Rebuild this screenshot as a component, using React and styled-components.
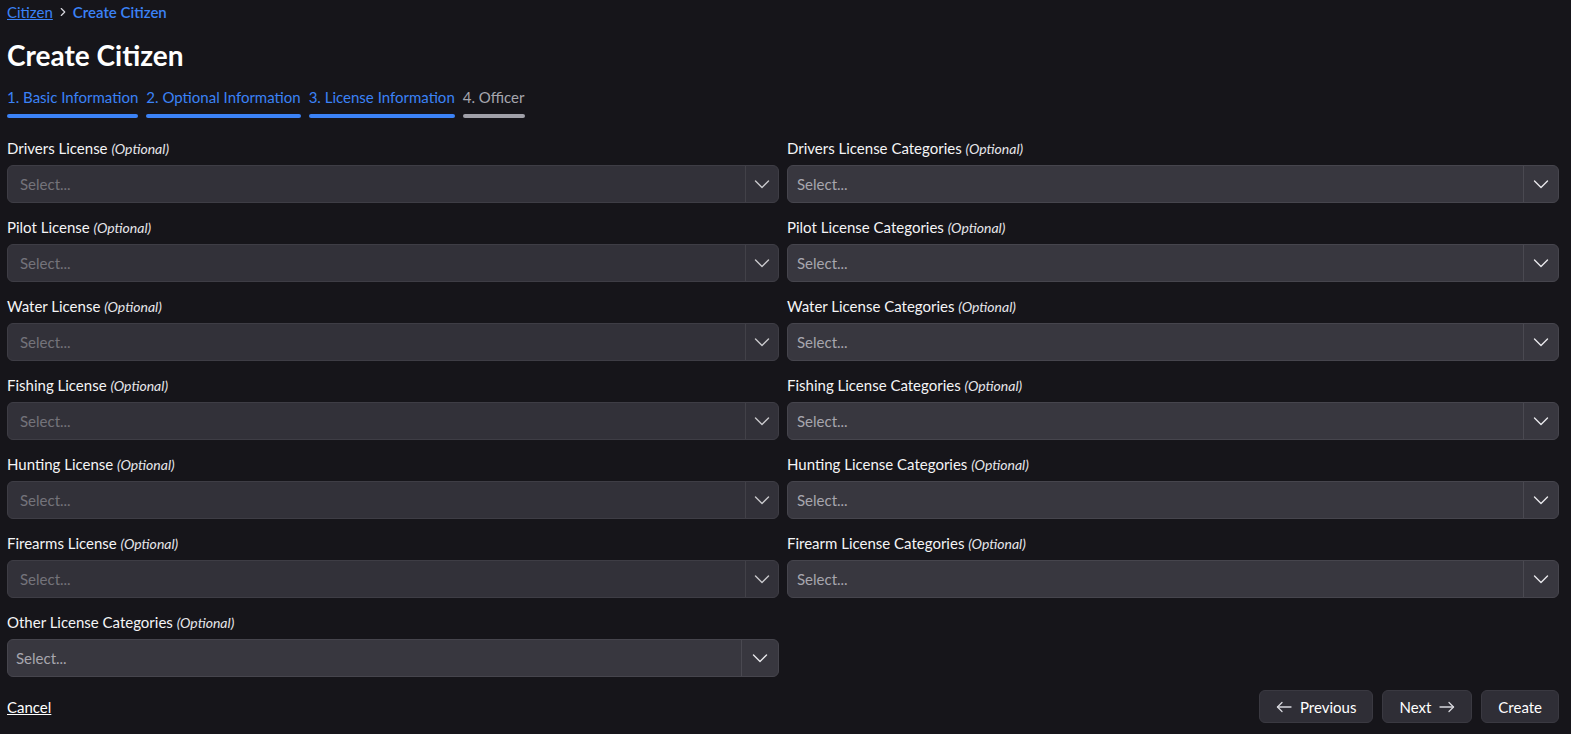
import React from "react";
import styled, { createGlobalStyle } from "styled-components";

const GlobalStyle = createGlobalStyle`
  html, body {
    margin: 0;
    padding: 0;
    background: #16151a;
  }
  body {
    font-family: "Lato", "Noto Sans", sans-serif;
    color: #ffffff;
  }
  * {
    box-sizing: border-box;
  }
`;

const Page = styled.main`
  height: 734px;
  overflow: hidden;
  padding: 1px 12px 0 7px;
  background: #16151a;
`;

const Breadcrumbs = styled.nav`
  display: flex;
  align-items: center;
  gap: 3px;
  height: 22px;
  font-size: 15px;
  color: #3b82f6;
  a {
    color: #3b82f6;
    text-decoration: underline;
  }
  span {
    font-weight: 600;
  }
  svg {
    color: #d6d6dc;
  }
`;

const Title = styled.h1`
  margin: 12px 0 0 0;
  font-size: 28px;
  line-height: 40px;
  font-weight: 700;
`;

const Steps = styled.ol`
  display: flex;
  gap: 8px;
  margin: 12px 0 0 0;
  padding: 0;
  list-style: none;
`;

const Step = styled.li`
  display: flex;
  flex-direction: column;
  gap: 7px;
  font-size: 15px;
  line-height: 20px;
  color: ${(p) => (p.$active ? "#3b82f6" : "#a6a6ae")};
  &::after {
    content: "";
    height: 4px;
    border-radius: 4px;
    background: ${(p) => (p.$active ? "#3b82f6" : "#a0a0a8")};
  }
`;

const Form = styled.form`
  margin-top: 20px;
`;

const Grid = styled.div`
  display: grid;
  grid-template-columns: 1fr 1fr;
  column-gap: 8px;
`;

const Field = styled.div`
  display: flex;
  flex-direction: column;
  margin-bottom: 14px;
`;

const Label = styled.label`
  display: block;
  height: 20px;
  font-size: 15px;
  line-height: 20px;
  margin-bottom: 7px;
  color: #f4f4f6;
  i {
    font-size: 14px;
    line-height: 20px;
    color: #e6e6ea;
  }
`;

const SelectBox = styled.div`
  display: flex;
  align-items: stretch;
  height: 38px;
  border: 1px solid #46454d;
  border-radius: 6px;
  background: #38373f;
  opacity: ${(p) => (p.$multi ? 1 : 0.85)};
`;

const Placeholder = styled.div`
  flex: 1;
  display: flex;
  align-items: center;
  padding-left: ${(p) => p.$inset}px;
  font-size: 15px;
  color: ${(p) => (p.$multi ? "#a7a6ae" : "#85848c")};
`;

const Indicator = styled.div`
  display: flex;
  align-items: center;
  justify-content: center;
  width: ${(p) => p.$width}px;
  border-left: 1px solid #4a4951;
  color: #e8e8ec;
`;

const Footer = styled.div`
  display: flex;
  align-items: center;
  justify-content: space-between;
  margin-top: -1px;
`;

const CancelLink = styled.a`
  font-size: 15px;
  color: #ffffff;
  text-decoration: underline;
`;

const Buttons = styled.div`
  display: flex;
  gap: 9px;
`;

const Button = styled.button`
  display: flex;
  align-items: center;
  gap: 8px;
  height: 33px;
  padding: 0 16px;
  border: 1px solid #3a3941;
  border-radius: 6px;
  background: #2f2e36;
  color: #ffffff;
  font-family: inherit;
  font-size: 15px;
  svg {
    color: #d8d8de;
  }
`;

const ChevronRight = () => (
  <svg width="14" height="14" viewBox="0 0 24 24" fill="none" stroke="currentColor" strokeWidth="2" strokeLinecap="round" strokeLinejoin="round">
    <polyline points="9 6 15 12 9 18" />
  </svg>
);

const ChevronDown = () => (
  <svg width="16" height="10" viewBox="0 0 16 10" fill="none" stroke="currentColor" strokeWidth="1.4" strokeLinecap="round" strokeLinejoin="round">
    <polyline points="1.5 2 8 8.5 14.5 2" />
  </svg>
);

const Arrow = ({ dir }) => (
  <svg width="16" height="12" viewBox="0 0 16 12" fill="none" stroke="currentColor" strokeWidth="1.3" strokeLinecap="round" strokeLinejoin="round">
    {dir === "left" ? (
      <>
        <line x1="15" y1="6" x2="1.5" y2="6" />
        <polyline points="6 1.5 1.5 6 6 10.5" />
      </>
    ) : (
      <>
        <line x1="1" y1="6" x2="14.5" y2="6" />
        <polyline points="10 1.5 14.5 6 10 10.5" />
      </>
    )}
  </svg>
);

const Select = ({ multi, inset, indicator }) => (
  <SelectBox $multi={multi}>
    <Placeholder $multi={multi} $inset={inset}>
      Select...
    </Placeholder>
    <Indicator $width={indicator}>
      <ChevronDown />
    </Indicator>
  </SelectBox>
);

const rows = [
  ["Drivers License", "Drivers License Categories"],
  ["Pilot License", "Pilot License Categories"],
  ["Water License", "Water License Categories"],
  ["Fishing License", "Fishing License Categories"],
  ["Hunting License", "Hunting License Categories"],
  ["Firearms License", "Firearm License Categories"],
];

const steps = [
  ["1. Basic Information", true],
  ["2. Optional Information", true],
  ["3. License Information", true],
  ["4. Officer", false],
];

export default function App() {
  return (
    <>
      <GlobalStyle />
      <Page>
        <Breadcrumbs>
          <a href="#citizen">Citizen</a>
          <ChevronRight />
          <span>Create Citizen</span>
        </Breadcrumbs>
        <Title>Create Citizen</Title>
        <Steps>
          {steps.map(([name, active]) => (
            <Step key={name} $active={active}>
              {name}
            </Step>
          ))}
        </Steps>
        <Form onSubmit={(e) => e.preventDefault()}>
          <Grid>
            {rows.map(([license, categories]) => (
              <React.Fragment key={license}>
                <Field>
                  <Label>
                    {license} <i>(Optional)</i>
                  </Label>
                  <Select inset={12} indicator={33} />
                </Field>
                <Field>
                  <Label>
                    {categories} <i>(Optional)</i>
                  </Label>
                  <Select multi inset={9} indicator={35} />
                </Field>
              </React.Fragment>
            ))}
            <Field>
              <Label>
                Other License Categories <i>(Optional)</i>
              </Label>
              <Select multi inset={8} indicator={37} />
            </Field>
          </Grid>
          <Footer>
            <CancelLink href="#cancel">Cancel</CancelLink>
            <Buttons>
              <Button type="button">
                <Arrow dir="left" />
                Previous
              </Button>
              <Button type="button">
                Next
                <Arrow dir="right" />
              </Button>
              <Button type="submit">Create</Button>
            </Buttons>
          </Footer>
        </Form>
      </Page>
    </>
  );
}
